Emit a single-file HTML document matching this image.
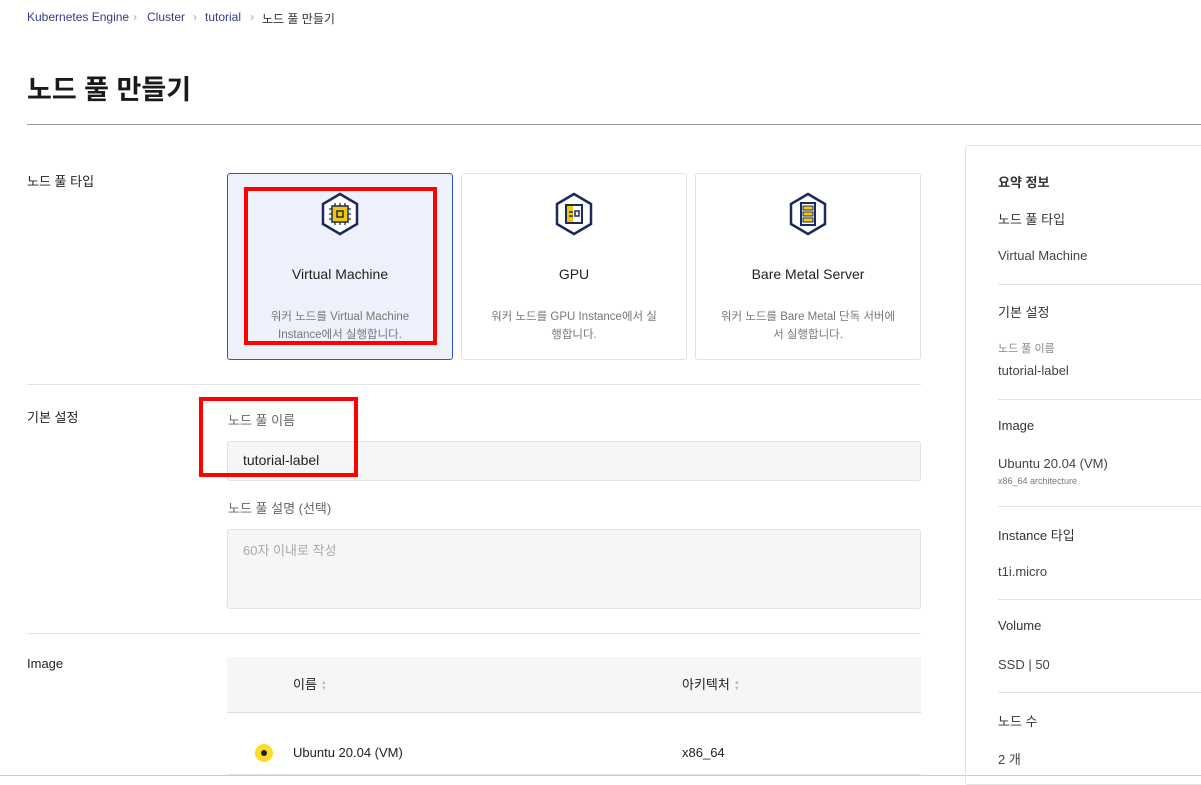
<!DOCTYPE html>
<html><head><meta charset="utf-8"><style>
*{margin:0;padding:0;box-sizing:border-box}
body{width:1201px;height:783px;overflow:hidden;background:#fff;font-family:"Liberation Sans","Noto Sans CJK KR",sans-serif;color:#222;position:relative}
.a{position:absolute;white-space:nowrap}
.bc{font-size:12px;color:#3a3a8a;top:10px}
.card{position:absolute;top:173px;width:226px;height:187px;border:1px solid #e2e2e2;border-radius:3px;background:#fff;text-align:center}
.card.sel{background:#eef1fb;border-color:#2f55c9}
.card .t{position:absolute;top:92px;left:0;right:0;font-size:14px;color:#222}
.card .d{position:absolute;top:134px;left:24px;right:24px;font-size:11.5px;color:#777;line-height:18px;white-space:normal}
.card svg{position:absolute;top:18px;left:92px}
.hr{position:absolute;height:1px;background:#e3e3e3}
.lab{font-size:13px;color:#222}
.rp{font-size:14px;color:#333}
.rs{font-size:13px;color:#444}
.sort{display:inline-block;vertical-align:middle;font-size:6px;line-height:6px;color:#bbb;margin-left:4px}
</style></head><body>
<div class="a bc" style="left:27px">Kubernetes Engine</div>
<div class="a bc" style="left:133px;color:#aaa">›</div>
<div class="a bc" style="left:147px">Cluster</div>
<div class="a bc" style="left:193px;color:#aaa">›</div>
<div class="a bc" style="left:205px">tutorial</div>
<div class="a bc" style="left:250px;color:#aaa">›</div>
<div class="a bc" style="left:262px;color:#333">노드 풀 만들기</div>
<div class="a" style="left:27px;top:68px;font-size:27px;font-weight:600;color:#1a1a1a">노드 풀 만들기</div>
<div class="hr" style="left:27px;top:124px;width:1174px;background:#999"></div>

<div class="a lab" style="left:27px;top:171px">노드 풀 타입</div>
<div class="card sel" style="left:227px">
<svg width="40" height="44" viewBox="0 0 40 44"><polygon points="20,2 37,12 37,32 20,42 3,32 3,12" fill="#fff" stroke="#1a2a5c" stroke-width="2.5"/><rect x="12" y="14" width="16" height="16" fill="#f5c800" stroke="#1a2a5c" stroke-width="1.5"/><rect x="17" y="19" width="6" height="6" fill="none" stroke="#1a2a5c" stroke-width="1.5"/><path d="M15 11v3M20 11v3M25 11v3M15 30v3M20 30v3M25 30v3M9 17h3M9 22h3M9 27h3M28 17h3M28 22h3M28 27h3" stroke="#1a2a5c" stroke-width="1.3"/></svg>
<div class="t">Virtual Machine</div><div class="d">워커 노드를 Virtual Machine Instance에서 실행합니다.</div></div>
<div class="card" style="left:461px">
<svg width="40" height="44" viewBox="0 0 40 44"><polygon points="20,2 37,12 37,32 20,42 3,32 3,12" fill="#fff" stroke="#1a2a5c" stroke-width="2.5"/><path d="M12 13h16v18H12z" fill="#fff" stroke="#1a2a5c" stroke-width="2"/><rect x="13" y="14" width="6" height="16" fill="#f5c800"/><path d="M15 20h4M15 24h4" stroke="#1a2a5c" stroke-width="1.5"/><rect x="21" y="19" width="4" height="5" fill="none" stroke="#1a2a5c" stroke-width="1.5"/></svg>
<div class="t">GPU</div><div class="d">워커 노드를 GPU Instance에서 실행합니다.</div></div>
<div class="card" style="left:695px">
<svg width="40" height="44" viewBox="0 0 40 44"><polygon points="20,2 37,12 37,32 20,42 3,32 3,12" fill="#fff" stroke="#1a2a5c" stroke-width="2.5"/><rect x="13" y="11" width="14" height="22" fill="#fff" stroke="#1a2a5c" stroke-width="2"/><rect x="15" y="14" width="10" height="4" fill="#f5c800" stroke="#1a2a5c" stroke-width="1"/><rect x="15" y="20" width="10" height="4" fill="#f5c800" stroke="#1a2a5c" stroke-width="1"/><rect x="15" y="26" width="10" height="4" fill="#f5c800" stroke="#1a2a5c" stroke-width="1"/></svg>
<div class="t">Bare Metal Server</div><div class="d">워커 노드를 Bare Metal 단독 서버에서 실행합니다.</div></div>
<div style="position:absolute;left:244px;top:187px;width:193px;height:158px;border:4px solid #f00"></div>

<div class="hr" style="left:27px;top:384px;width:894px"></div>
<div class="a lab" style="left:27px;top:407px">기본 설정</div>
<div class="a" style="left:228px;top:410px;font-size:13px;color:#666">노드 풀 이름</div>
<div style="position:absolute;left:227px;top:441px;width:694px;height:40px;background:#f6f6f6;border:1px solid #e2e2e2;border-radius:3px"></div>
<div class="a" style="left:243px;top:452px;font-size:14px;color:#222">tutorial-label</div>
<div style="position:absolute;left:199px;top:397px;width:159px;height:80px;border:4px solid #f00"></div>
<div class="a" style="left:228px;top:498px;font-size:13px;color:#666">노드 풀 설명 (선택)</div>
<div style="position:absolute;left:227px;top:529px;width:694px;height:80px;background:#f6f6f6;border:1px solid #e2e2e2;border-radius:3px"></div>
<div class="a" style="left:243px;top:540px;font-size:13px;color:#aaa">60자 이내로 작성</div>

<div class="hr" style="left:27px;top:633px;width:894px"></div>
<div class="a lab" style="left:27px;top:656px">Image</div>
<div style="position:absolute;left:227px;top:657px;width:694px;height:56px;background:#f6f6f6;border-bottom:1px solid #ddd"></div>
<div class="a" style="left:293px;top:674px;font-size:13px;color:#222">이름<span class="sort">▲<br>▼</span></div>
<div class="a" style="left:682px;top:674px;font-size:13px;color:#222">아키텍처<span class="sort">▲<br>▼</span></div>
<div style="position:absolute;left:255px;top:744px;width:18px;height:18px;border-radius:50%;background:#fadd2b"></div>
<div style="position:absolute;left:261px;top:750px;width:6px;height:6px;border-radius:50%;background:#222"></div>
<div class="a" style="left:293px;top:745px;font-size:13px;color:#222">Ubuntu 20.04 (VM)</div>
<div class="a" style="left:682px;top:745px;font-size:13px;color:#222">x86_64</div>
<div class="hr" style="left:227px;top:774px;width:694px"></div>
<div class="hr" style="left:0;top:775px;width:1201px;background:#ccc"></div>

<div style="position:absolute;left:965px;top:145px;width:240px;height:640px;border:1px solid #e2e2e2;border-radius:3px"></div>
<div class="a rp" style="left:998px;top:172px;font-weight:bold;font-size:13px">요약 정보</div>
<div class="a rp" style="left:998px;top:209px;font-size:13px">노드 풀 타입</div>
<div class="a rs" style="left:998px;top:248px">Virtual Machine</div>
<div class="hr" style="left:998px;top:284px;width:203px"></div>
<div class="a rp" style="left:998px;top:302px;font-size:13px">기본 설정</div>
<div class="a" style="left:998px;top:340px;font-size:11px;color:#888">노드 풀 이름</div>
<div class="a rs" style="left:998px;top:363px">tutorial-label</div>
<div class="hr" style="left:998px;top:399px;width:203px"></div>
<div class="a rp" style="left:998px;top:418px;font-size:13px">Image</div>
<div class="a rs" style="left:998px;top:456px">Ubuntu 20.04 (VM)</div>
<div class="a" style="left:998px;top:476px;font-size:9px;color:#777">x86_64 architecture</div>
<div class="hr" style="left:998px;top:506px;width:203px"></div>
<div class="a rp" style="left:998px;top:525px;font-size:13px">Instance 타입</div>
<div class="a rs" style="left:998px;top:564px">t1i.micro</div>
<div class="hr" style="left:998px;top:599px;width:203px"></div>
<div class="a rp" style="left:998px;top:618px;font-size:13px">Volume</div>
<div class="a rs" style="left:998px;top:657px">SSD | 50</div>
<div class="hr" style="left:998px;top:692px;width:203px"></div>
<div class="a rp" style="left:998px;top:711px;font-size:13px">노드 수</div>
<div class="a rs" style="left:998px;top:749px">2 개</div>
</body></html>
